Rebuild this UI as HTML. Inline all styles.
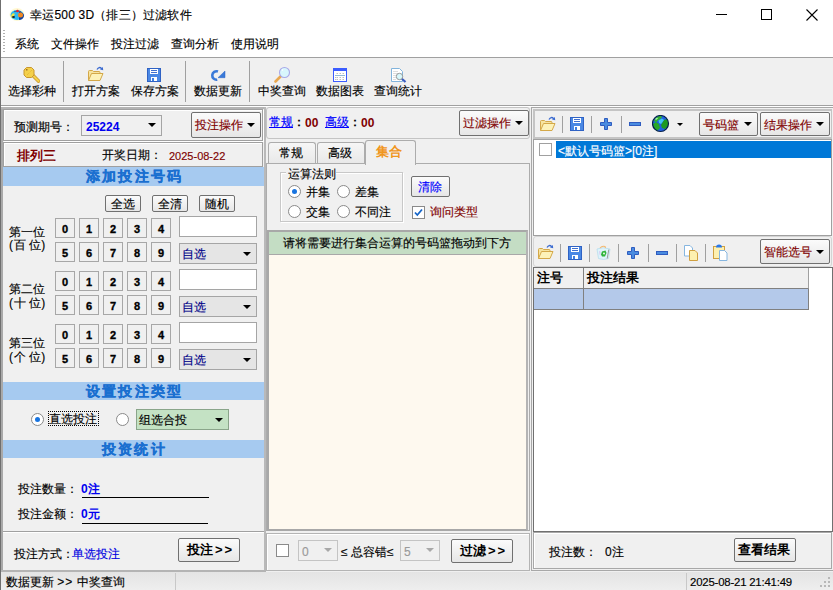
<!DOCTYPE html>
<html><head><meta charset="utf-8">
<style>
*{box-sizing:border-box;margin:0;padding:0}
html,body{width:833px;height:590px;overflow:hidden;background:#f0f0f0;font-family:"Liberation Sans",sans-serif;font-size:12px;color:#000}
.a{position:absolute}
.t{position:absolute;white-space:nowrap;line-height:12px;font-size:12px}
.t{-webkit-text-stroke:0.15px}
.b{font-weight:bold;-webkit-text-stroke:0 !important}
.btn{position:absolute;border:1px solid #707070;border-radius:2px;background:linear-gradient(#fbfbfb,#e6e6e6)}
.nb{position:absolute;width:20px;height:20px;border:1px solid #a7a7a7;background:#f0f0f0}
.nb span{position:absolute;left:0;right:0;top:5px;text-align:center;font-weight:bold;font-size:11px;line-height:11px;-webkit-text-stroke:0.35px #000}
.arr{position:absolute;width:0;height:0;border-left:4px solid transparent;border-right:4px solid transparent;border-top:4px solid #000}
.sep{position:absolute;width:1px;background:#a0a0a0}
.band{position:absolute;left:4px;width:260px;height:19px;background:#a6caf0}
.band .t{font-size:14px;line-height:14px;font-weight:bold;color:#1a6fd0;letter-spacing:2.2px;-webkit-text-stroke:0.3px #1a6fd0}
.rad{position:absolute;width:13px;height:13px;border-radius:50%;border:1px solid #8a8a8a;background:#fff}
.rad.on::after{content:"";position:absolute;left:3px;top:3px;width:5px;height:5px;border-radius:50%;background:#1874e0}
.chk{position:absolute;width:13px;height:13px;border:1px solid #8a8a8a;background:#fff}
</style></head><body>

<!-- window left border -->
<div class="a" style="left:0;top:0;width:1px;height:590px;background:#6f6f6f"></div>

<!-- title bar -->
<div class="a" style="left:1px;top:0;width:832px;height:29px;background:#fff"></div>
<div class="t" style="left:30px;top:9px;letter-spacing:0.2px">幸运500 3D（排三）过滤软件</div>

<!-- menubar -->
<div class="a" style="left:1px;top:29px;width:832px;height:28px;background:#fff"></div>
<div class="a" style="left:1px;top:57px;width:832px;height:1px;background:#a0a0a0"></div>
<div class="t" style="left:15px;top:38px">系统</div>
<div class="t" style="left:51px;top:38px">文件操作</div>
<div class="t" style="left:111px;top:38px">投注过滤</div>
<div class="t" style="left:171px;top:38px">查询分析</div>
<div class="t" style="left:231px;top:38px">使用说明</div>

<!-- toolbar -->
<div class="a" style="left:1px;top:58px;width:832px;height:47px;background:#f0f0f0"></div>
<div class="a" style="left:1px;top:105px;width:832px;height:1px;background:#a0a0a0"></div>
<div class="a" style="left:1px;top:106px;width:832px;height:1px;background:#fff"></div>
<div class="sep" style="left:63px;top:61px;height:41px"></div>
<div class="sep" style="left:185px;top:61px;height:41px"></div>
<div class="sep" style="left:249px;top:61px;height:41px"></div>
<div class="t" style="left:8px;top:85px">选择彩种</div>
<div class="t" style="left:72px;top:85px">打开方案</div>
<div class="t" style="left:131px;top:85px">保存方案</div>
<div class="t" style="left:194px;top:85px">数据更新</div>
<div class="t" style="left:258px;top:85px">中奖查询</div>
<div class="t" style="left:316px;top:85px">数据图表</div>
<div class="t" style="left:374px;top:85px">查询统计</div>


<!-- ===== LEFT PANEL ===== -->
<div class="a" style="left:1px;top:107px;width:2px;height:465px;background:#a9a9a9"></div>
<div class="a" style="left:1px;top:107px;width:263px;height:2px;background:#b4b4b4"></div>
<div class="a" style="left:264px;top:107px;width:2px;height:465px;background:#b9b9b9"></div>
<div class="a" style="left:1px;top:570px;width:265px;height:2px;background:#b4b4b4"></div>
<!-- panel 1 -->
<div class="a" style="left:3px;top:109px;width:260px;height:32px;border:1px solid #a0a0a0;box-shadow:inset 1px 1px 0 #fff, 1px 1px 0 #fff"></div>
<div class="t" style="left:14px;top:121px">预测期号：</div>
<div class="a" style="left:81px;top:115px;width:81px;height:21px;border:1px solid #a5a5a5;background:#f0f0f0"></div>
<div class="t b" style="left:86px;top:121px;color:#0000f0">25224</div>
<div class="arr" style="left:148px;top:123px"></div>
<div class="btn" style="left:191px;top:112px;width:70px;height:26px"></div>
<div class="t" style="left:195px;top:119px;color:#800000">投注操作</div>
<div class="arr" style="left:247px;top:123px"></div>
<!-- panel 2 -->
<div class="a" style="left:3px;top:142px;width:260px;height:25px;border:1px solid #a0a0a0;box-shadow:inset 1px 1px 0 #fff"></div>
<div class="t b" style="left:17px;top:149px;color:#800000;font-size:13px;line-height:13px">排列三</div>
<div class="t" style="left:102px;top:149px">开奖日期：</div>
<div class="t" style="left:169px;top:150px;color:#800000;font-size:11px">2025-08-22</div>
<!-- band 1 -->
<div class="band" style="left:3px;top:167px;width:261px"><div class="t" style="left:83px;top:2px">添加投注号码</div></div>
<!-- buttons -->
<div class="btn" style="left:105px;top:195px;width:36px;height:17px"></div>
<div class="t" style="left:111px;top:198px">全选</div>
<div class="btn" style="left:152px;top:195px;width:36px;height:17px"></div>
<div class="t" style="left:158px;top:198px">全清</div>
<div class="btn" style="left:199px;top:195px;width:36px;height:17px"></div>
<div class="t" style="left:205px;top:198px">随机</div>
<div class="t" style="left:9px;top:226px">第一位</div>
<div class="t" style="left:9px;top:239px">(<span style="margin-left:1px"></span>百 位)</div>
<div class="nb" style="left:55px;top:218px"><span>0</span></div>
<div class="nb" style="left:79px;top:218px"><span>1</span></div>
<div class="nb" style="left:103px;top:218px"><span>2</span></div>
<div class="nb" style="left:127px;top:218px"><span>3</span></div>
<div class="nb" style="left:151px;top:218px"><span>4</span></div>
<div class="nb" style="left:55px;top:242px"><span>5</span></div>
<div class="nb" style="left:79px;top:242px"><span>6</span></div>
<div class="nb" style="left:103px;top:242px"><span>7</span></div>
<div class="nb" style="left:127px;top:242px"><span>8</span></div>
<div class="nb" style="left:151px;top:242px"><span>9</span></div>
<div class="a" style="left:179px;top:216px;width:78px;height:21px;border:1px solid #a5a5a5;background:#fff"></div>
<div class="a" style="left:179px;top:243px;width:78px;height:21px;border:1px solid #a5a5a5;background:#e5e5e5"></div>
<div class="t" style="left:182px;top:248px;color:#000088">自选</div>
<div class="arr" style="left:243px;top:252px"></div>
<div class="t" style="left:9px;top:283px">第二位</div>
<div class="t" style="left:9px;top:297px">(<span style="margin-left:1px"></span>十 位)</div>
<div class="nb" style="left:55px;top:271px"><span>0</span></div>
<div class="nb" style="left:79px;top:271px"><span>1</span></div>
<div class="nb" style="left:103px;top:271px"><span>2</span></div>
<div class="nb" style="left:127px;top:271px"><span>3</span></div>
<div class="nb" style="left:151px;top:271px"><span>4</span></div>
<div class="nb" style="left:55px;top:295px"><span>5</span></div>
<div class="nb" style="left:79px;top:295px"><span>6</span></div>
<div class="nb" style="left:103px;top:295px"><span>7</span></div>
<div class="nb" style="left:127px;top:295px"><span>8</span></div>
<div class="nb" style="left:151px;top:295px"><span>9</span></div>
<div class="a" style="left:179px;top:269px;width:78px;height:21px;border:1px solid #a5a5a5;background:#fff"></div>
<div class="a" style="left:179px;top:296px;width:78px;height:21px;border:1px solid #a5a5a5;background:#e5e5e5"></div>
<div class="t" style="left:182px;top:301px;color:#000088">自选</div>
<div class="arr" style="left:243px;top:305px"></div>
<div class="t" style="left:9px;top:337px">第三位</div>
<div class="t" style="left:9px;top:351px">(<span style="margin-left:1px"></span>个 位)</div>
<div class="nb" style="left:55px;top:324px"><span>0</span></div>
<div class="nb" style="left:79px;top:324px"><span>1</span></div>
<div class="nb" style="left:103px;top:324px"><span>2</span></div>
<div class="nb" style="left:127px;top:324px"><span>3</span></div>
<div class="nb" style="left:151px;top:324px"><span>4</span></div>
<div class="nb" style="left:55px;top:348px"><span>5</span></div>
<div class="nb" style="left:79px;top:348px"><span>6</span></div>
<div class="nb" style="left:103px;top:348px"><span>7</span></div>
<div class="nb" style="left:127px;top:348px"><span>8</span></div>
<div class="nb" style="left:151px;top:348px"><span>9</span></div>
<div class="a" style="left:179px;top:322px;width:78px;height:21px;border:1px solid #a5a5a5;background:#fff"></div>
<div class="a" style="left:179px;top:349px;width:78px;height:21px;border:1px solid #a5a5a5;background:#e5e5e5"></div>
<div class="t" style="left:182px;top:354px;color:#000088">自选</div>
<div class="arr" style="left:243px;top:358px"></div>

<!-- band 2 -->
<div class="band" style="left:3px;top:382px;width:261px;height:18px"><div class="t" style="left:83px;top:2px">设置投注类型</div></div>
<div class="rad on" style="left:31px;top:413px"></div>
<div class="a" style="left:48px;top:411px;width:51px;height:15px;border:1px dotted #000"></div>
<div class="t" style="left:49px;top:413px">直选投注</div>
<div class="rad" style="left:116px;top:413px"></div>
<div class="a" style="left:136px;top:409px;width:93px;height:21px;border:1px solid #8aa58a;background:#c4e2c4"></div>
<div class="t" style="left:139px;top:414px">组选合投</div>
<div class="arr" style="left:215px;top:418px"></div>
<!-- band 3 -->
<div class="band" style="left:3px;top:440px;width:261px;height:18px"><div class="t" style="left:99px;top:2px">投资统计</div></div>
<div class="t" style="left:18px;top:483px">投注数量：</div>
<div class="t b" style="left:81px;top:483px;color:#0000f0">0注</div>
<div class="a" style="left:82px;top:497px;width:127px;height:1px;background:#000"></div>
<div class="t" style="left:18px;top:508px">投注金额：</div>
<div class="t b" style="left:81px;top:508px;color:#0000f0">0元</div>
<div class="a" style="left:82px;top:523px;width:126px;height:1px;background:#000"></div>
<div class="a" style="left:3px;top:531px;width:261px;height:1px;background:#a0a0a0"></div>
<div class="a" style="left:3px;top:532px;width:261px;height:1px;background:#fff"></div>
<div class="t" style="left:14px;top:548px">投注方式：</div>
<div class="t" style="left:72px;top:548px;color:#0000e0">单选投注</div>
<div class="btn" style="left:178px;top:538px;width:62px;height:24px"></div>
<div class="t b" style="left:187px;top:543px;font-size:13px;line-height:13px">投注<span style="letter-spacing:2px;margin-left:2px">&gt;&gt;</span></div>


<!-- ===== MIDDLE PANEL ===== -->
<div class="a" style="left:266px;top:107px;width:264px;height:32px;border:1px solid #c4c4c4;border-radius:3px;background:#f0f0f0"></div>
<div class="t" style="left:269px;top:116px;color:#0000ff;text-decoration:underline">常规</div>
<div class="t b" style="left:293px;top:116px;color:#000">：</div>
<div class="t b" style="left:305px;top:117px;color:#800000">00</div>
<div class="t" style="left:325px;top:116px;color:#0000ff;text-decoration:underline">高级</div>
<div class="t b" style="left:349px;top:116px;color:#000">：</div>
<div class="t b" style="left:361px;top:117px;color:#800000">00</div>
<div class="btn" style="left:459px;top:110px;width:70px;height:26px"></div>
<div class="t" style="left:463px;top:117px;color:#800000">过滤操作</div>
<div class="arr" style="left:515px;top:121px"></div>
<!-- tabs -->
<div class="a" style="left:268px;top:142px;width:48px;height:22px;border:1px solid #acacac;border-bottom:none;border-radius:3px 3px 0 0;background:linear-gradient(#f6f6f6,#e8e8e8)"></div>
<div class="t" style="left:279px;top:147px">常规</div>
<div class="a" style="left:317px;top:142px;width:48px;height:22px;border:1px solid #acacac;border-bottom:none;border-radius:3px 3px 0 0;background:linear-gradient(#f6f6f6,#e8e8e8)"></div>
<div class="t" style="left:328px;top:147px">高级</div>
<div class="a" style="left:266px;top:163px;width:264px;height:368px;border:1px solid #acacac;background:#f0f0f0"></div>
<div class="a" style="left:365px;top:140px;width:51px;height:25px;border:1px solid #acacac;border-bottom:none;border-radius:3px 3px 0 0;background:#f0f0f0"></div>
<div class="t b" style="left:376px;top:145px;color:#f0961e;font-size:13px;line-height:13px">集合</div>
<!-- group box -->
<div class="a" style="left:280px;top:172px;width:123px;height:50px;border:1px solid #c8c8c8;box-shadow:1px 1px 0 #fff, inset 1px 1px 0 #fff"></div>
<div class="a" style="left:286px;top:168px;width:50px;height:12px;background:#f0f0f0"></div>
<div class="t" style="left:288px;top:168px">运算法则</div>
<div class="rad on" style="left:288px;top:185px"></div>
<div class="t" style="left:306px;top:186px">并集</div>
<div class="rad" style="left:337px;top:185px"></div>
<div class="t" style="left:355px;top:186px">差集</div>
<div class="rad" style="left:288px;top:205px"></div>
<div class="t" style="left:306px;top:206px">交集</div>
<div class="rad" style="left:337px;top:205px"></div>
<div class="t" style="left:355px;top:206px">不同注</div>
<div class="btn" style="left:411px;top:176px;width:39px;height:21px"></div>
<div class="t" style="left:418px;top:181px;color:#0000ff">清除</div>
<div class="chk" style="left:412px;top:206px"></div>
<svg class="a" style="left:413px;top:207px" width="11" height="11" viewBox="0 0 11 11"><path d="M2 5.5 L4.3 8 L9 2.5" stroke="#1464c8" stroke-width="1.8" fill="none"/></svg>
<div class="t" style="left:430px;top:206px;color:#800000">询问类型</div>
<!-- green header + cream list -->
<div class="a" style="left:267px;top:230px;width:261px;height:301px;border-left:2px solid #a8a8a8;border-top:2px solid #a8a8a8;border-right:2px solid #b4b4b4;border-bottom:2px solid #a8a8a8;background:#fef9ef"></div>
<div class="a" style="left:269px;top:232px;width:257px;height:23px;background:#c4ddc4;border-bottom:1px solid #a8a8a8"></div>
<div class="t" style="left:283px;top:237px">请将需要进行集合运算的号码篮拖动到下方</div>
<!-- bottom bar -->
<div class="a" style="left:266px;top:533px;width:264px;height:38px;border:1px solid #b4b4b4;box-shadow:inset 1px 1px 0 #fff"></div>
<div class="chk" style="left:276px;top:544px"></div>
<div class="a" style="left:298px;top:540px;width:40px;height:21px;border:1px solid #c4c4c4;background:#f0f0f0"></div>
<div class="t" style="left:302px;top:546px;color:#9a9a9a">0</div>
<div class="arr" style="left:324px;top:548px;border-top-color:#a8a8a8"></div>
<div class="t" style="left:341px;top:546px">≤ 总容错≤</div>
<div class="a" style="left:400px;top:540px;width:40px;height:21px;border:1px solid #c4c4c4;background:#f0f0f0"></div>
<div class="t" style="left:404px;top:546px;color:#9a9a9a">5</div>
<div class="arr" style="left:426px;top:548px;border-top-color:#a8a8a8"></div>
<div class="btn" style="left:451px;top:539px;width:62px;height:24px"></div>
<div class="t b" style="left:460px;top:544px;font-size:13px;line-height:13px">过滤<span style="letter-spacing:2px;margin-left:2px">&gt;&gt;</span></div>

<!-- ===== RIGHT PANEL ===== -->
<div class="a" style="left:531px;top:107px;width:302px;height:464px;border:1px solid #a8a8a8;border-right:none;background:#f0f0f0"></div>
<div class="a" style="left:533px;top:109px;width:299px;height:30px;border:2px solid #c4c4c4;border-right:1px solid #c4c4c4;background:#f0f0f0"></div>
<div class="sep" style="left:562px;top:116px;height:17px"></div>
<div class="sep" style="left:591px;top:116px;height:17px"></div>
<div class="sep" style="left:621px;top:116px;height:17px"></div>
<div class="arr" style="left:677px;top:123px;border-left-width:3px;border-right-width:3px;border-top-width:3px"></div>
<div class="btn" style="left:699px;top:112px;width:59px;height:24px"></div>
<div class="t" style="left:703px;top:119px;color:#800000">号码篮</div>
<div class="arr" style="left:744px;top:122px"></div>
<div class="btn" style="left:760px;top:112px;width:70px;height:24px"></div>
<div class="t" style="left:764px;top:119px;color:#800000">结果操作</div>
<div class="arr" style="left:816px;top:122px"></div>
<!-- list 1 -->
<div class="a" style="left:533px;top:139px;width:299px;height:97px;border:1px solid #a0a0a0;background:#fff"></div>
<div class="chk" style="left:539px;top:143px;border-color:#a0a0a0"></div>
<div class="a" style="left:556px;top:141px;width:275px;height:17px;background:#0078d7"></div>
<div class="t" style="left:558px;top:145px;color:#fff">&lt;默认号码篮&gt;[0注]</div>
<!-- toolbar 2 -->
<div class="a" style="left:533px;top:236px;width:299px;height:31px;border:1px solid #d4d4d4;border-radius:3px;background:#f0f0f0"></div>
<div class="sep" style="left:560px;top:244px;height:18px"></div>
<div class="sep" style="left:589px;top:244px;height:18px"></div>
<div class="sep" style="left:618px;top:244px;height:18px"></div>
<div class="sep" style="left:648px;top:244px;height:18px"></div>
<div class="sep" style="left:676px;top:244px;height:18px"></div>
<div class="sep" style="left:705px;top:244px;height:18px"></div>
<div class="btn" style="left:760px;top:239px;width:70px;height:25px"></div>
<div class="t" style="left:764px;top:246px;color:#800000">智能选号</div>
<div class="arr" style="left:816px;top:250px"></div>
<!-- grid -->
<div class="a" style="left:533px;top:267px;width:300px;height:265px;border:1px solid #707070;background:#fff"></div>
<div class="a" style="left:534px;top:268px;width:275px;height:21px;background:#f0f0f0;border-right:1px solid #a0a0a0;border-bottom:1px solid #808080"></div>
<div class="a" style="left:583px;top:268px;width:1px;height:42px;background:#808080"></div>
<div class="t b" style="left:537px;top:271px;font-size:13px;line-height:13px">注号</div>
<div class="t b" style="left:587px;top:271px;font-size:13px;line-height:13px">投注结果</div>
<div class="a" style="left:534px;top:289px;width:275px;height:21px;background:#b4c9ea;border-right:1px solid #808080;border-bottom:1px solid #808080"></div>
<div class="a" style="left:583px;top:289px;width:1px;height:21px;background:#808080"></div>
<!-- bottom -->
<div class="a" style="left:533px;top:532px;width:299px;height:37px;border:1px solid #a8a8a8;box-shadow:inset 1px 1px 0 #fff"></div>
<div class="t" style="left:549px;top:546px">投注数：</div>
<div class="t" style="left:605px;top:546px">0注</div>
<div class="btn" style="left:734px;top:538px;width:62px;height:24px"></div>
<div class="t b" style="left:738px;top:543px;font-size:13px;line-height:13px">查看结果</div>

<!-- status bar -->
<div class="a" style="left:1px;top:572px;width:832px;height:18px;background:linear-gradient(#e4e4e4,#eeeeee)"></div>
<div class="t" style="left:6px;top:576px">数据更新 <span style="letter-spacing:1px">&gt;&gt;</span> 中奖查询</div>
<div class="a" style="left:175px;top:573px;width:1px;height:17px;background:#c8c8c8"></div>
<div class="a" style="left:686px;top:573px;width:1px;height:17px;background:#c8c8c8"></div>
<div class="t" style="left:690px;top:576px;font-size:11.4px;letter-spacing:-0.2px">2025-08-21 21:41:49</div>


<!-- ===== ICONS ===== -->
<svg class="a" style="left:9px;top:6px" width="17" height="16" viewBox="0 0 17 16">
<ellipse cx="8" cy="8.5" rx="7.5" ry="6.5" fill="#fff6c0" opacity="0.7"/>
<ellipse cx="8" cy="9" rx="6.5" ry="5" fill="#2cb8f0"/>
<path d="M2 10 q1 -4 4 -2 q-1 2 -3 4 z" fill="#f0e040"/>
<ellipse cx="4.5" cy="11" rx="1.5" ry="1" fill="#202020"/>
<path d="M10 6 q5 0 5 4 q-1 4 -5 4 z" fill="#1040a0"/>
<circle cx="11.5" cy="9" r="2.5" fill="#f08820"/>
<path d="M5 5.5 h7" stroke="#4060a0" stroke-width="1"/>
<circle cx="8.5" cy="5" r="1.3" fill="#f02020"/>
</svg>
<!-- key -->
<svg class="a" style="left:23px;top:66px" width="17" height="17" viewBox="0 0 17 17">
<path d="M10 9.5 L15.5 15" stroke="#c8962e" stroke-width="3.6" stroke-linecap="square"/>
<path d="M10 9.5 L15.5 15" stroke="#f4d04a" stroke-width="2" stroke-linecap="square"/>
<path d="M3.5 1.5 h5 l2.5 2.5 v5 l-2.5 2.5 h-5 l-2.5 -2.5 v-5 z" fill="#f4d04a" stroke="#c8962e"/>
<rect x="3" y="3" width="1.5" height="1.5" fill="#a87020"/>
<path d="M4 9 l5 -5" stroke="#e0b030" stroke-width="0.9" stroke-dasharray="1 1"/>
</svg>
<svg class="a" style="left:87px;top:65px" width="17" height="17" viewBox="0 0 17 17">
<path d="M1.5 15.5 V6.5 q0 -1 1 -1 h3 l1 1 h5.5 q1 0 1 1 v1.5" fill="#f6e4a0" stroke="#d4a848"/>
<path d="M1.5 15.5 L4.5 8.5 H16 L13 15.5 Z" fill="#fdf2b8" stroke="#d4a848" stroke-linejoin="round"/>
<path d="M10 4.5 q2 -3.5 4.8 -0.8" fill="none" stroke="#3a6ad0" stroke-width="1.3"/>
<path d="M13 4.6 L16.2 5.2 L15.8 2 Z" fill="#3a6ad0"/>
</svg>
<svg class="a" style="left:147px;top:68px" width="14" height="14" viewBox="0 0 14 14">
<rect x="0.5" y="0.5" width="13" height="13" fill="#4a88e4" stroke="#2f62c4"/>
<rect x="3" y="1" width="8" height="5" fill="#fff"/>
<rect x="4" y="2" width="6" height="1" fill="#3f6fd0"/>
<rect x="4" y="4" width="6" height="1" fill="#3f6fd0"/>
<rect x="4" y="9" width="6" height="4" fill="#fff"/>
<rect x="5" y="10" width="2" height="3" fill="#3f7ee0"/>
</svg>
<!-- refresh -->
<svg class="a" style="left:210px;top:69px" width="16" height="13" viewBox="0 0 16 13">
<path d="M7.95 2.5 A4.25 4.25 0 1 0 7.24 10.69" fill="none" stroke="#3a7ad8" stroke-width="2.6"/>
<path d="M8 8.7 L15 2 L15 8.7 Z" fill="#3a7ad8" stroke="#2e66c8" stroke-width="0.5"/>
</svg>
<!-- magnifier -->
<svg class="a" style="left:274px;top:66px" width="17" height="17" viewBox="0 0 17 17">
<path d="M1.5 15.5 L6.5 10.5" stroke="#e8a850" stroke-width="2.6" stroke-linecap="round"/>
<circle cx="10.5" cy="6.5" r="5" fill="#d8f6fc" stroke="#a8a8e8" stroke-width="1.1"/>
<path d="M8 4.5 l1 -1" stroke="#fff" stroke-width="1.2"/>
</svg>
<!-- calendar -->
<svg class="a" style="left:333px;top:68px" width="14" height="14" viewBox="0 0 14 14">
<rect x="0.5" y="0.5" width="13" height="13" fill="#fff" stroke="#3b5cff"/>
<rect x="0" y="0" width="14" height="3" fill="#3b5cff"/>
<path d="M3.5 5.5 h1.5 M6.5 5.5 h1.5 M9.5 5.5 h1.5 M2 7.5 h10 M2 9.5 h1 M3.5 9.5 h1.5 M6.5 9.5 h1.5 M9.5 9.5 h1.5 M2 11.5 h1 M3.5 11.5 h1.5 M6.5 11.5 h1.5 M9.5 11.5 h1.5" stroke="#b8b8b8" stroke-width="0.9"/>
<path d="M2 7.5 h10" stroke="#8ab8d8" stroke-width="0.9"/>
</svg>
<!-- doc search -->
<svg class="a" style="left:391px;top:68px" width="16" height="15" viewBox="0 0 16 15">
<path d="M0.5 0.5 h8 l3 3 v10 h-11 z" fill="#fff" stroke="#82b4dc"/>
<path d="M2 3.5 h5 M2 5.5 h5 M2 7.5 h4 M2 9.5 h3 M2 11.5 h3" stroke="#d0d0d0" stroke-width="0.7"/>
<path d="M10.5 10.5 l4 3.5" stroke="#3a5cc0" stroke-width="2.2"/>
<circle cx="8.5" cy="8.5" r="3.2" fill="#d8f8fc" stroke="#909090" stroke-width="0.9"/>
</svg>
<!-- right toolbar 1 -->
<svg class="a" style="left:539px;top:115px" width="17" height="17" viewBox="0 0 17 17">
<path d="M1.5 15.5 V6.5 q0 -1 1 -1 h3 l1 1 h5.5 q1 0 1 1 v1.5" fill="#f6e4a0" stroke="#d4a848"/>
<path d="M1.5 15.5 L4.5 8.5 H16 L13 15.5 Z" fill="#fdf2b8" stroke="#d4a848" stroke-linejoin="round"/>
<path d="M10 4.5 q2 -3.5 4.8 -0.8" fill="none" stroke="#3a6ad0" stroke-width="1.3"/>
<path d="M13 4.6 L16.2 5.2 L15.8 2 Z" fill="#3a6ad0"/>
</svg>
<svg class="a" style="left:570px;top:117px" width="14" height="14" viewBox="0 0 14 14">
<rect x="0.5" y="0.5" width="13" height="13" fill="#4a88e4" stroke="#2f62c4"/>
<rect x="3" y="1" width="8" height="5" fill="#fff"/>
<rect x="4" y="2" width="6" height="1" fill="#3f6fd0"/>
<rect x="4" y="4" width="6" height="1" fill="#3f6fd0"/>
<rect x="4" y="9" width="6" height="4" fill="#fff"/>
<rect x="5" y="10" width="2" height="3" fill="#3f7ee0"/>
</svg>
<svg class="a" style="left:600px;top:118px" width="12" height="12" viewBox="0 0 12 12">
<path d="M4.5 0.5 h3 v4 h4 v3 h-4 v4 h-3 v-4 h-4 v-3 h4 z" fill="#4a8ce0" stroke="#2f5cc0"/>
</svg>
<svg class="a" style="left:629px;top:122px" width="12" height="4" viewBox="0 0 12 4">
<rect x="0.5" y="0.5" width="11" height="3" fill="#4a8ce0" stroke="#2f5cc0"/>
</svg>
<svg class="a" style="left:652px;top:115px" width="18" height="18" viewBox="0 0 18 18">
<circle cx="8.5" cy="8.5" r="8" fill="#2060e0"/>
<path d="M2 6 q2 -5 7 -5.5 l1 2 l-4 3 l-2 2 z" fill="#30b030"/>
<path d="M1 9 l3 -2 l3 2 l1 4 l-3 3 q-4 -2 -4 -7 z" fill="#28a828"/>
<path d="M9 10 l3 -5 l3 -1 q2 3 1 7 l-3 3 l-3 -1 z" fill="#1e9a22"/>
<path d="M6.5 5.5 l3.5 -2 l2 1.5 l-3 4 l-2 -1 z" fill="#40c8f0"/>
<path d="M3 4 l2 -1.5 l1 1 l-2 1.5 z" fill="#a8f0a0"/>
<circle cx="8.5" cy="8.5" r="8" fill="none" stroke="#06204a" stroke-width="1.2"/>
</svg>
<!-- right toolbar 2 -->
<svg class="a" style="left:537px;top:243px" width="17" height="17" viewBox="0 0 17 17">
<path d="M1.5 15.5 V6.5 q0 -1 1 -1 h3 l1 1 h5.5 q1 0 1 1 v1.5" fill="#f6e4a0" stroke="#d4a848"/>
<path d="M1.5 15.5 L4.5 8.5 H16 L13 15.5 Z" fill="#fdf2b8" stroke="#d4a848" stroke-linejoin="round"/>
<path d="M10 4.5 q2 -3.5 4.8 -0.8" fill="none" stroke="#3a6ad0" stroke-width="1.3"/>
<path d="M13 4.6 L16.2 5.2 L15.8 2 Z" fill="#3a6ad0"/>
</svg>
<svg class="a" style="left:568px;top:246px" width="14" height="14" viewBox="0 0 14 14">
<rect x="0.5" y="0.5" width="13" height="13" fill="#4a88e4" stroke="#2f62c4"/>
<rect x="3" y="1" width="8" height="5" fill="#fff"/>
<rect x="4" y="2" width="6" height="1" fill="#3f6fd0"/>
<rect x="4" y="4" width="6" height="1" fill="#3f6fd0"/>
<rect x="4" y="9" width="6" height="4" fill="#fff"/>
<rect x="5" y="10" width="2" height="3" fill="#3f7ee0"/>
</svg>
<svg class="a" style="left:596px;top:245px" width="15" height="15" viewBox="0 0 15 15">
<path d="M1 4 q6 -2.5 13 0 l-1.5 9.5 q-5 2 -10 0 z" fill="#dff4fb" stroke="#b8dcec" stroke-width="0.8"/>
<path d="M12.8 4.5 l-1.6 9" stroke="#9a9a9a" stroke-width="1"/>
<path d="M4 3 q2 -2.5 5 -1.5 l0.5 1.5" fill="none" stroke="#f4b870" stroke-width="1.1"/>
<path d="M6 6.5 l3.5 -1 l1 2.5 l-1.5 3.5 l-3 0 l-1 -2 z" fill="#2eb43a"/>
<circle cx="8" cy="8.5" r="0.9" fill="#fff"/>
<path d="M3 6 l1.5 0.5 l0 4 l-1 -1 z" fill="#d8c8f4"/>
</svg>
<svg class="a" style="left:627px;top:247px" width="12" height="12" viewBox="0 0 12 12">
<path d="M4.5 0.5 h3 v4 h4 v3 h-4 v4 h-3 v-4 h-4 v-3 h4 z" fill="#4a8ce0" stroke="#2f5cc0"/>
</svg>
<svg class="a" style="left:656px;top:251px" width="12" height="4" viewBox="0 0 12 4">
<rect x="0.5" y="0.5" width="11" height="3" fill="#4a8ce0" stroke="#2f5cc0"/>
</svg>
<!-- copy -->
<svg class="a" style="left:684px;top:245px" width="15" height="17" viewBox="0 0 15 17">
<path d="M0.5 0.5 h5.5 l2.5 2.5 v8 h-8 z" fill="#fff" stroke="#86b6e0"/>
<path d="M5.5 5.5 h5.5 l2.5 2.5 v7.5 h-8 z" fill="#fdf0b0" stroke="#d0a040"/>
</svg>
<!-- paste -->
<svg class="a" style="left:713px;top:244px" width="16" height="18" viewBox="0 0 16 18">
<rect x="0.5" y="2.5" width="11" height="12" fill="#fdf0b0" stroke="#d0a040"/>
<path d="M3 3.5 q0 -3 3 -3 q3 0 3 3 z" fill="#2a78e8"/>
<path d="M6.5 6.5 h5 l2.5 2.5 v7.5 h-7.5 z" fill="#fff" stroke="#86b6e0"/>
</svg>
<!-- title buttons -->
<div class="a" style="left:716px;top:14px;width:11px;height:1px;background:#000"></div>
<div class="a" style="left:761px;top:9px;width:11px;height:11px;border:1px solid #000"></div>
<svg class="a" style="left:806px;top:9px" width="12" height="12" viewBox="0 0 12 12"><path d="M0.5 0.5 L11.5 11.5 M11.5 0.5 L0.5 11.5" stroke="#000" stroke-width="1.1"/></svg>
<!-- menu grip -->
<div class="a" style="left:3px;top:30px;width:2px;height:22px;background:repeating-linear-gradient(#b0b0b0 0 1px,transparent 1px 3px)"></div>
<!-- status grip -->
<svg class="a" style="left:818px;top:575px" width="14" height="14" viewBox="0 0 14 14"><g fill="#b8b8b8"><rect x="10" y="2" width="2" height="2"/><rect x="6" y="6" width="2" height="2"/><rect x="10" y="6" width="2" height="2"/><rect x="2" y="10" width="2" height="2"/><rect x="6" y="10" width="2" height="2"/><rect x="10" y="10" width="2" height="2"/></g></svg>

</body></html>
